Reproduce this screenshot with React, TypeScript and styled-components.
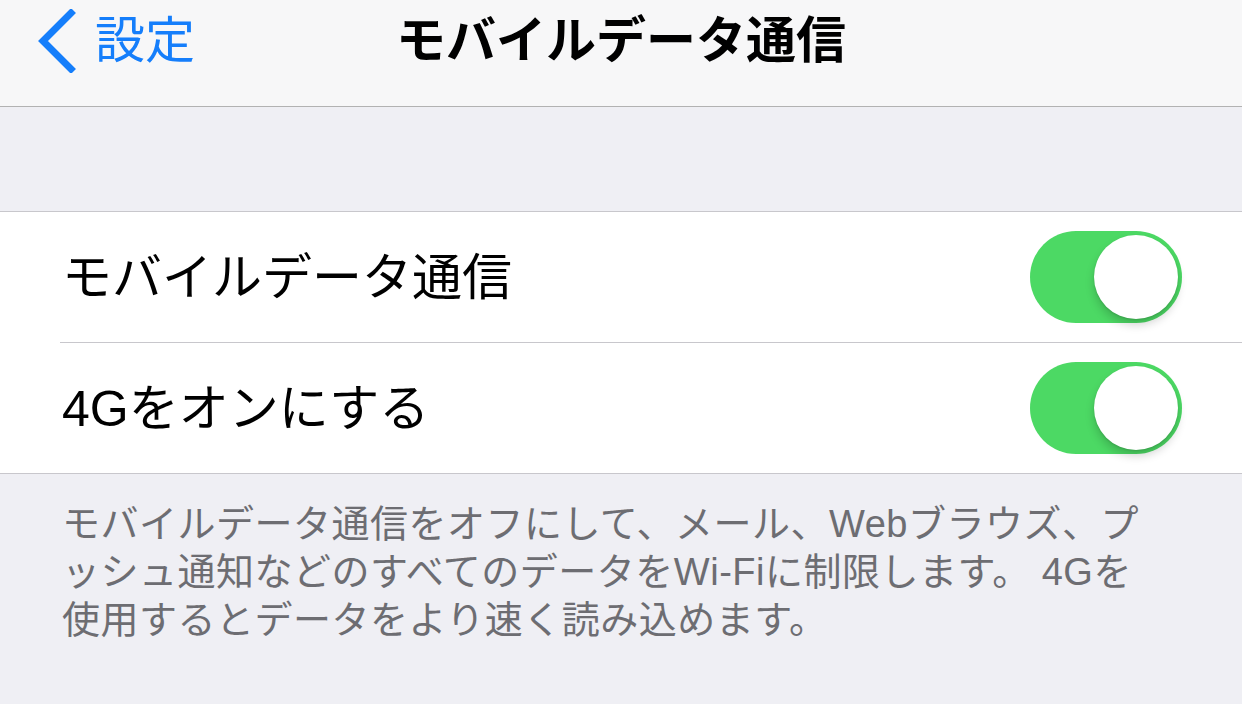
import styled, { createGlobalStyle } from "styled-components";

const GlobalStyle = createGlobalStyle`
    html, body {
        margin: 0;
        padding: 0;
        background: #efeff4;
    }
    body {
        font-family: "Liberation Sans", "Noto Sans CJK JP", sans-serif;
        -webkit-font-smoothing: antialiased;
    }
`;

const Screen = styled.div`
    width: 1242px;
    height: 704px;
    overflow: hidden;
    background: #efeff4;
`;

const NavBar = styled.header`
    display: grid;
    grid-template-columns: 1fr auto 1fr;
    align-items: center;
    height: 80px;
    padding-bottom: 26px;
    background: #f7f7f8;
    border-bottom: 1px solid #b2b2b2;
`;

const BackButton = styled.div`
    display: flex;
    align-items: center;
    gap: 18px;
    padding-left: 35px;
    color: #157efb;
    font-size: 50px;
    cursor: pointer;
`;

const BackLabel = styled.span`
    padding-bottom: 10px;
`;

const NavTitle = styled.h1`
    margin: 0;
    padding-bottom: 10px;
    font-size: 50px;
    font-weight: 700;
    color: #000;
`;

const Spacer = styled.div`
    height: 104px;
`;

const Group = styled.section`
    background: #fff;
    border-top: 1px solid #c8c7cc;
    border-bottom: 1px solid #c8c7cc;
    padding-left: 60px;
`;

const Row = styled.div<{ $last?: boolean }>`
    display: flex;
    align-items: center;
    justify-content: space-between;
    height: 130px;
    padding: 0 60px 0 2px;
    border-bottom: ${({ $last }) => ($last ? "none" : "1px solid #c8c7cc")};
`;

const RowLabel = styled.span`
    padding-bottom: 8px;
    font-size: 50px;
    color: #000;
`;

const Track = styled.div<{ $on: boolean }>`
    position: relative;
    width: 152px;
    height: 92px;
    border-radius: 46px;
    background: ${({ $on }) => ($on ? "#4cd964" : "#e5e5ea")};
`;

const Knob = styled.div<{ $on: boolean }>`
    position: absolute;
    top: 4px;
    left: ${({ $on }) => ($on ? "64px" : "4px")};
    width: 84px;
    height: 84px;
    border-radius: 50%;
    background: #fff;
    box-shadow: 0 6px 10px rgba(0, 0, 0, 0.18), 0 1px 2px rgba(0, 0, 0, 0.12);
`;

const Footer = styled.p`
    margin: 0;
    padding: 26px 60px 0 62px;
    font-size: 38px;
    line-height: 48px;
    letter-spacing: 0.5px;
    color: #6d6d72;
    white-space: nowrap;
`;

function Toggle({ on }: { on: boolean }) {
    return (
        <Track $on={on}>
            <Knob $on={on} />
        </Track>
    );
}

function App() {
    return (
        <Screen>
            <GlobalStyle />
            <NavBar>
                <BackButton>
                    <svg width="42" height="64" viewBox="0 0 42 64" fill="none">
                        <path d="M36 4 L8 32 L36 60" stroke="#157efb" strokeWidth="7" strokeLinecap="square" />
                    </svg>
                    <BackLabel>設定</BackLabel>
                </BackButton>
                <NavTitle>モバイルデータ通信</NavTitle>
                <div />
            </NavBar>
            <Spacer />
            <Group>
                <Row>
                    <RowLabel>モバイルデータ通信</RowLabel>
                    <Toggle on />
                </Row>
                <Row $last>
                    <RowLabel>4Gをオンにする</RowLabel>
                    <Toggle on />
                </Row>
            </Group>
            <Footer>
                モバイルデータ通信をオフにして、メール、Webブラウズ、プ<br />
                ッシュ通知などのすべてのデータをWi-Fiに制限します。 4Gを<br />
                使用するとデータをより速く読み込めます。
            </Footer>
        </Screen>
    );
}

export default App;
